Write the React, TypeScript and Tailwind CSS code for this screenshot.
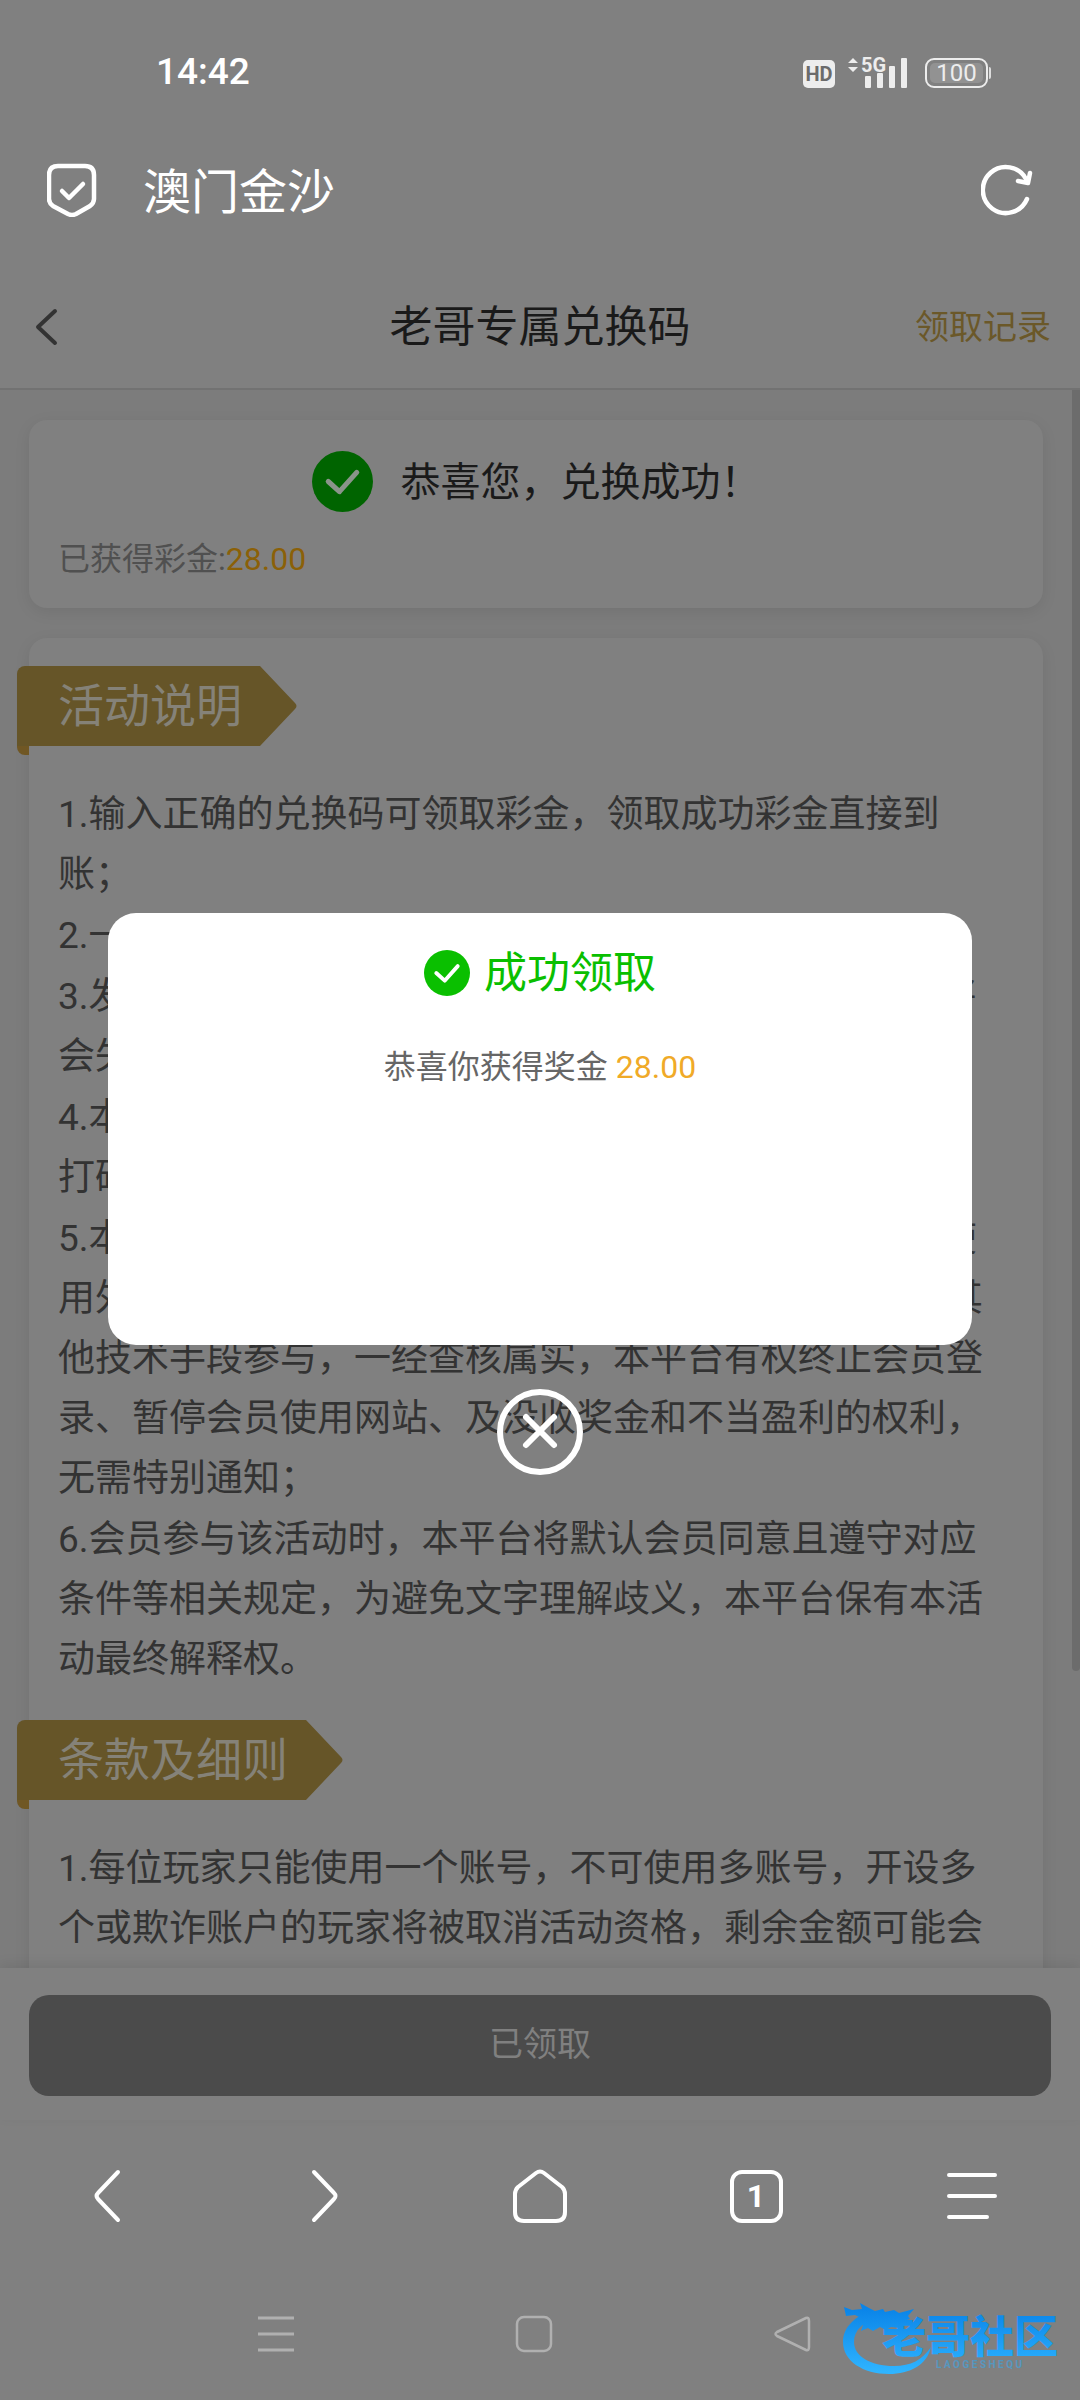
import type { ReactNode } from "react";

const rules = [
  "1.输入正确的兑换码可领取彩金，领取成功彩金直接到账；",
  "2.一个兑换码仅限一个会员账号使用一次；",
  "3.发放的兑换码请您在有效期内进行兑换，逾期未兑换将会失效作废；",
  "4.本活动所得彩金需完成一倍流水即可提款，禁止刷水、打码套利等行为；",
  "5.本平台禁止会员以任何不正当的方式参与活动，包括使用外挂程序、机器人、多重账号、恶意软件漏洞，以及其他技术手段参与，一经查核属实，本平台有权终止会员登录、暂停会员使用网站、及没收奖金和不当盈利的权利，无需特别通知；",
  "6.会员参与该活动时，本平台将默认会员同意且遵守对应条件等相关规定，为避免文字理解歧义，本平台保有本活动最终解释权。",
];

const terms = [
  "1.每位玩家只能使用一个账号，不可使用多账号，开设多个或欺诈账户的玩家将被取消活动资格，剩余金额可能会",
];

function CheckCircle({ className }: { className: string }) {
  return (
    <svg viewBox="0 0 60 60" className={className} aria-hidden="true">
      <circle cx="30" cy="30" r="30" fill="currentColor" />
      <path
        d="M16 30l11 10 17-19"
        fill="none"
        className="stroke-(--tick)"
        strokeWidth="5"
        strokeLinecap="round"
        strokeLinejoin="round"
      />
    </svg>
  );
}

function StatusBar() {
  return (
    <div className="flex h-36 shrink-0 items-center justify-between pr-[89px] pl-[156px]">
      <time className="text-[37px] leading-[48px] font-medium text-white">14:42</time>
      <div className="flex items-end pb-0.5 text-[#ededed]">
        <span className="mr-3 flex h-7 w-8 items-center justify-center rounded-[5px] bg-[#ededed] text-[20px] leading-7 font-bold text-[#6b6b6b]">
          HD
        </span>
        <svg viewBox="0 0 62 34" className="mr-4 h-[34px] w-[62px] overflow-visible" fill="currentColor" aria-label="5G">
          <path d="M6 4l5 5H1zM6 18l5-5H1z" strokeLinejoin="round" />
          <text x="14" y="18" fontSize="20" fontWeight="700">
            5G
          </text>
          <rect x="18" y="22" width="6" height="12" rx="1" />
          <rect x="30" y="19" width="6" height="15" rx="1" />
          <rect x="42" y="12" width="6" height="22" rx="1" />
          <rect x="54" y="4" width="6" height="30" rx="1" />
        </svg>
        <span className="flex h-[30px] w-[63px] items-center justify-center rounded-[9px] border-2 border-[#ededed] p-[3px]">
          <span className="flex h-full w-full items-center justify-center rounded-[5px] bg-[#929292] text-[24px] leading-5">
            100
          </span>
        </span>
        <span className="mb-[9px] ml-px h-3 w-0.5 rounded-r bg-[#dddddd]" />
      </div>
    </div>
  );
}

function BrowserBar() {
  return (
    <div className="flex h-[92px] shrink-0 items-center px-[47px] text-white">
      <svg viewBox="0 0 50 54" className="h-[54px] w-[50px]" fill="none" stroke="currentColor" strokeWidth="4.5" strokeLinecap="round" strokeLinejoin="round" aria-hidden="true">
        <path d="M11 3h27q9 0 9 9v24q0 4-4 7L29 51q-4 2-8 0L6 43q-4-3-4-7V12q0-9 9-9z" />
        <path d="M15 28l7 7 14-14" />
      </svg>
      <h1 className="ml-[46px] flex-1 pt-1.5 text-[48px] leading-[64px]">澳门金沙</h1>
      <button type="button" aria-label="刷新">
        <svg viewBox="0 0 52 52" className="h-[52px] w-[52px]" fill="none" stroke="currentColor" strokeWidth="4.5" strokeLinecap="round" strokeLinejoin="round">
          <path d="M46 35A23 23 0 1 1 45 15" />
          <path d="M49 9l-2 10-10-2" />
        </svg>
      </button>
    </div>
  );
}

function PageHeader() {
  return (
    <header className="z-10 grid h-[154px] shrink-0 grid-cols-3 items-center border-b-2 border-[#727272] px-[29px] pt-[30px]">
      <button type="button" aria-label="返回" className="justify-self-start px-1.5 text-[#333333]">
        <svg viewBox="0 0 24 38" className="h-[38px] w-6" fill="none" stroke="currentColor" strokeWidth="4" strokeLinecap="round" strokeLinejoin="round">
          <path d="M20 3L3 19l17 16" />
        </svg>
      </button>
      <h2 className="text-center text-[43px] leading-[60px] whitespace-nowrap text-[#1a1a1a]">老哥专属兑换码</h2>
      <a href="#records" className="justify-self-end text-[34px] leading-[48px] text-[#6b5829]">
        领取记录
      </a>
    </header>
  );
}

function Ribbon({ children }: { children: ReactNode }) {
  return (
    <div className="-ml-3">
      <div className="flex h-20">
        <h3 className="rounded-tl-lg bg-[#665528] pr-[18px] pl-[41px] text-[46px] leading-20 text-[#858278]">
          {children}
        </h3>
        <svg viewBox="0 0 37 80" className="h-20 w-[37px] text-[#665528]" fill="currentColor" aria-hidden="true">
          <path d="M0 0L35 37q3 3 0 6L0 80z" />
        </svg>
      </div>
      <div className="h-[9px] w-3 rounded-bl-lg bg-[#705724]" />
    </div>
  );
}

function TextList({ items }: { items: string[] }) {
  return (
    <ul className="mt-[30px] flex flex-col gap-px pr-9 pl-[29px] text-[37px] leading-[60px] text-[#333333]">
      {items.map((item) => (
        <li key={item}>{item}</li>
      ))}
    </ul>
  );
}

function Content() {
  return (
    <main className="relative min-h-0 flex-1 overflow-hidden bg-[#7c7c7c]">
      <div className="flex flex-col gap-[30px] pt-[30px] pr-[37px] pl-[29px]">
        <section className="rounded-[18px] bg-[#808080] px-[29px] pt-[29px] pb-[23px] shadow-[0_4px_16px_rgba(0,0,0,0.08)]">
          <div className="flex items-center justify-center gap-7">
            <CheckCircle className="h-[61px] w-[61px] text-[#006400] [--tick:#8a948a]" />
            <p className="pt-1 text-[40px] leading-[60px] text-[#1a1a1a]">恭喜您，兑换成功！</p>
          </div>
          <p className="mt-5 text-[32px] leading-[52px] text-[#505050]">
            已获得彩金:<span className="text-[#8b6008]">28.00</span>
          </p>
        </section>
        <section className="rounded-[18px] bg-[#808080] pt-7 pb-16 shadow-[0_4px_16px_rgba(0,0,0,0.08)]">
          <Ribbon>活动说明</Ribbon>
          <TextList items={rules} />
          <div className="mt-[30px]">
            <Ribbon>条款及细则</Ribbon>
          </div>
          <TextList items={terms} />
        </section>
      </div>
      <div className="absolute top-0 right-0 h-[1281px] w-2 rounded-b bg-[#6c6c6c]" />
    </main>
  );
}

function BrowserNav() {
  const icon = "h-14 w-14";
  return (
    <nav className="grid h-[152px] shrink-0 grid-cols-5 place-items-center text-white">
      <button type="button" aria-label="后退">
        <svg viewBox="0 0 56 56" className={icon} fill="none" stroke="currentColor" strokeWidth="4" strokeLinecap="round" strokeLinejoin="round">
          <path d="M38 4L18 25q-3 3 0 6l20 21" />
        </svg>
      </button>
      <button type="button" aria-label="前进">
        <svg viewBox="0 0 56 56" className={icon} fill="none" stroke="currentColor" strokeWidth="4" strokeLinecap="round" strokeLinejoin="round">
          <path d="M18 4l20 21q3 3 0 6L18 52" />
        </svg>
      </button>
      <button type="button" aria-label="主页">
        <svg viewBox="0 0 56 56" className={icon} fill="none" stroke="currentColor" strokeWidth="4" strokeLinejoin="round">
          <path d="M24 5q4-3 8 0l18 14q3 3 3 7v18q0 9-9 9H12q-9 0-9-9V26q0-4 3-7z" />
        </svg>
      </button>
      <button
        type="button"
        aria-label="标签页 1"
        className="flex h-[53px] w-[53px] items-center justify-center rounded-xl border-4 border-white text-[32px] leading-10 font-bold"
      >
        1
      </button>
      <button type="button" aria-label="菜单">
        <svg viewBox="0 0 56 56" className={icon} stroke="currentColor" strokeWidth="4" strokeLinecap="round">
          <path d="M5 7h46M5 28h46M5 49h38" />
        </svg>
      </button>
    </nav>
  );
}

function SystemNav() {
  return (
    <nav className="flex h-32 shrink-0 items-center pr-[268px] pb-1 pl-[256px]">
      <div className="flex flex-1 items-center justify-between text-[#b0b0b0]">
        <button type="button" aria-label="最近任务">
          <svg viewBox="0 0 40 40" className="h-10 w-10" stroke="currentColor" strokeWidth="3">
            <path d="M2 4h36M2 20h36M2 36h36" />
          </svg>
        </button>
        <button type="button" aria-label="主屏幕">
          <svg viewBox="0 0 40 40" className="h-10 w-10" fill="none" stroke="currentColor" strokeWidth="2.5">
            <rect x="3" y="3" width="34" height="34" rx="7" />
          </svg>
        </button>
        <button type="button" aria-label="返回上一级">
          <svg viewBox="0 0 40 40" className="h-10 w-10" fill="none" stroke="currentColor" strokeWidth="2.5" strokeLinejoin="round">
            <path d="M34 4Q37 3 37 7v26q0 4-3 3L5 22q-3-2 0-4z" />
          </svg>
        </button>
      </div>
    </nav>
  );
}

function Watermark() {
  return (
    <svg viewBox="0 0 224 80" className="absolute right-3.5 bottom-5 z-30 h-20 w-56" aria-label="老哥社区">
      <defs>
        <linearGradient id="sky" x1="0" y1="0" x2="0" y2="80" gradientUnits="userSpaceOnUse">
          <stop offset="0.1" stopColor="#0a84e8" />
          <stop offset="0.9" stopColor="#2fb4ff" />
        </linearGradient>
      </defs>
      <g fill="url(#sky)">
        <path d="M30 11C12 16 1 28 1 42c0 19 20 32 46 32 21 0 38-9 42-27-9 13-20 19-37 19-24 0-40-10-40-24 0-12 9-20 26-26z" />
        <path d="M2 7l8 3 10-1-2-6 9 5 6 3 8-2 2 3 9-2 5 3 15-4-6 7 2 3-7 2 3 4-8-1 2 4-9-1-5 3-6-3-7 4-5-3-7 3 2-6-7-2 5-5-6-3-9 1z" />
        <text x="40" y="53" fontSize="44" fontWeight="900">
          老哥社区
        </text>
        <text x="94" y="68" fontSize="10" fontWeight="700" opacity="0.5">
          L A O G E S H E Q U
        </text>
      </g>
    </svg>
  );
}

function ResultDialog() {
  return (
    <div className="absolute inset-0 z-20 flex flex-col items-center justify-center pb-3">
      <div role="dialog" aria-labelledby="result-title" className="flex h-[432px] w-4/5 flex-col items-center rounded-[28px] bg-white pt-[30px]">
        <div className="flex items-center gap-3.5 text-[#0abf00]">
          <CheckCircle className="h-[46px] w-[46px] [--tick:#ffffff]" />
          <h2 id="result-title" className="text-[43px] leading-[60px]">
            成功领取
          </h2>
        </div>
        <p className="mt-10 text-[32px] leading-[48px] text-[#666666]">
          恭喜你获得奖金 <span className="text-[#f0aa28]">28.00</span>
        </p>
      </div>
      <button type="button" aria-label="关闭" className="mt-11 text-white">
        <svg viewBox="0 0 86 86" className="h-[86px] w-[86px]" fill="none" stroke="currentColor" strokeWidth="6" strokeLinecap="round">
          <circle cx="43" cy="43" r="40" />
          <path d="M29 28l28 28M57 28L29 56" />
        </svg>
      </button>
    </div>
  );
}

export default function App() {
  return (
    <div className="relative flex h-screen flex-col overflow-hidden bg-[#808080] font-[Roboto,'Noto_Sans_CJK_SC',sans-serif]" lang="zh-CN">
      <StatusBar />
      <BrowserBar />
      <PageHeader />
      <Content />
      <footer className="z-10 shrink-0 bg-[#808080] px-[29px] pt-[27px] pb-6 shadow-[0_-4px_12px_rgba(0,0,0,0.08)]">
        <button type="button" disabled className="h-[101px] w-full rounded-[20px] bg-[#4b4b4b] pb-1 text-[34px] leading-[48px] text-[#808080]">
          已领取
        </button>
      </footer>
      <BrowserNav />
      <SystemNav />
      <Watermark />
      <ResultDialog />
    </div>
  );
}
